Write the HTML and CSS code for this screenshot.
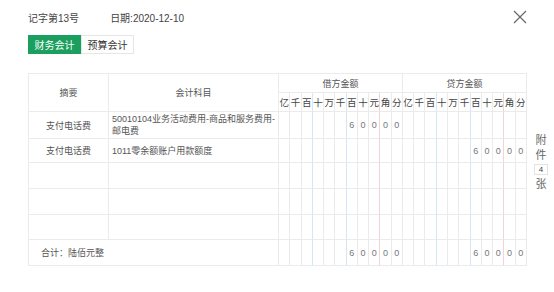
FILE: index.html
```html
<!DOCTYPE html>
<html lang="zh-CN">
<head>
  <meta charset="UTF-8" />
  <title>记账凭证</title>
  <link rel="stylesheet" href="styles.css">
</head>
<body>

  <div class="voucher">
    <div class="voucher-top">
      <div class="voucher-info">
        <span>记字第13号</span>
        <span class="voucher-date">日期:2020-12-10</span>
      </div>
      <button class="close-btn" aria-label="关闭">
        <svg width="14" height="14" viewBox="0 0 14 14">
          <path d="M1 1L13 13M13 1L1 13" stroke="#6b6b6b" stroke-width="1.3" fill="none"/>
        </svg>
      </button>
    </div>

    <div class="tabs">
      <button class="tab active">财务会计</button>
      <button class="tab">预算会计</button>
    </div>

    <div class="voucher-body">
      <table class="entry-table">
        <colgroup>
          <col class="c-summary">
          <col class="c-subject">
          <col><col><col><col><col><col><col><col><col><col><col>
          <col><col><col><col><col><col><col><col><col><col><col>
        </colgroup>
        <thead>
          <tr class="head-1">
            <th rowspan="2">摘要</th>
            <th rowspan="2">会计科目</th>
            <th colspan="11">借方金额</th>
            <th colspan="11">贷方金额</th>
          </tr>
          <tr class="head-2">
            <th>亿</th><th>千</th><th class="bl">百</th><th>十</th><th>万</th><th class="bl">千</th><th>百</th><th>十</th><th class="rd">元</th><th>角</th><th>分</th>
            <th>亿</th><th>千</th><th class="bl">百</th><th>十</th><th>万</th><th class="bl">千</th><th>百</th><th>十</th><th class="rd">元</th><th>角</th><th>分</th>
          </tr>
        </thead>
        <tbody>
          <tr class="row-a">
            <td class="summary">支付电话费</td>
            <td class="subject"><span class="line">50010104业务活动费用-商品和服务费用-</span><br>邮电费</td>
            <td></td><td></td><td class="bl"></td><td></td><td></td><td class="bl"></td><td>6</td><td>0</td><td class="rd">0</td><td>0</td><td>0</td>
            <td></td><td></td><td class="bl"></td><td></td><td></td><td class="bl"></td><td></td><td></td><td class="rd"></td><td></td><td></td>
          </tr>
          <tr class="row-b">
            <td class="summary">支付电话费</td>
            <td class="subject">1011零余额账户用款额度</td>
            <td></td><td></td><td class="bl"></td><td></td><td></td><td class="bl"></td><td></td><td></td><td class="rd"></td><td></td><td></td>
            <td></td><td></td><td class="bl"></td><td></td><td></td><td class="bl"></td><td>6</td><td>0</td><td class="rd">0</td><td>0</td><td>0</td>
          </tr>
          <tr class="row-c">
            <td></td><td></td>
            <td></td><td></td><td class="bl"></td><td></td><td></td><td class="bl"></td><td></td><td></td><td class="rd"></td><td></td><td></td>
            <td></td><td></td><td class="bl"></td><td></td><td></td><td class="bl"></td><td></td><td></td><td class="rd"></td><td></td><td></td>
          </tr>
          <tr class="row-c">
            <td></td><td></td>
            <td></td><td></td><td class="bl"></td><td></td><td></td><td class="bl"></td><td></td><td></td><td class="rd"></td><td></td><td></td>
            <td></td><td></td><td class="bl"></td><td></td><td></td><td class="bl"></td><td></td><td></td><td class="rd"></td><td></td><td></td>
          </tr>
          <tr class="row-d">
            <td></td><td></td>
            <td></td><td></td><td class="bl"></td><td></td><td></td><td class="bl"></td><td></td><td></td><td class="rd"></td><td></td><td></td>
            <td></td><td></td><td class="bl"></td><td></td><td></td><td class="bl"></td><td></td><td></td><td class="rd"></td><td></td><td></td>
          </tr>
          <tr class="row-total">
            <td class="total" colspan="2">合计：陆佰元整</td>
            <td></td><td></td><td class="bl"></td><td></td><td></td><td class="bl"></td><td>6</td><td>0</td><td class="rd">0</td><td>0</td><td>0</td>
            <td></td><td></td><td class="bl"></td><td></td><td></td><td class="bl"></td><td>6</td><td>0</td><td class="rd">0</td><td>0</td><td>0</td>
          </tr>
        </tbody>
      </table>

      <div class="attach">
        <span>附</span>
        <span>件</span>
        <span class="attach-count">4</span>
        <span>张</span>
      </div>
    </div>
  </div>

</body>
</html>
```

FILE: styles.css
```css
* {
  box-sizing: border-box;
  margin: 0;
  padding: 0;
}

body {
  font-family: 'Liberation Sans', 'Noto Sans CJK SC', sans-serif;
  background-color: #ffffff;
  color: #555555;
}

.voucher {
  padding: 8px 0 0 28px;
}

.voucher-top {
  width: 499px;
  height: 18px;
  display: flex;
  align-items: center;
  justify-content: space-between;
}

.voucher-info {
  display: flex;
  font-size: 10px;
  color: #444444;
}

.voucher-date {
  margin-left: 31px;
}

.close-btn {
  border: none;
  background: none;
  width: 14px;
  height: 14px;
  display: flex;
  cursor: pointer;
}

.tabs {
  display: flex;
  margin-top: 9px;
}

.tab {
  width: 53px;
  height: 19px;
  font-family: inherit;
  font-size: 10px;
  color: #333333;
  background-color: #ffffff;
  border: 1px solid #e6e6e6;
  cursor: pointer;
}

.tab.active {
  background-color: #1b9f5e;
  border-color: #1b9f5e;
  color: #ffffff;
}

.voucher-body {
  display: flex;
  align-items: flex-start;
  margin-top: 19px;
}

.entry-table {
  width: 499px;
  table-layout: fixed;
  border-collapse: separate;
  border-spacing: 0;
  border-top: 1px solid #ebebeb;
  border-left: 1px solid #ebebeb;
  font-size: 9px;
}

.c-summary {
  width: 80px;
}

.c-subject {
  width: 170px;
}

.entry-table th,
.entry-table td {
  border-right: 1px solid #ebebeb;
  border-bottom: 1px solid #ebebeb;
  font-weight: normal;
  text-align: center;
  padding: 0;
  color: #555555;
}

.entry-table .bl {
  border-right-color: #d3e7f6;
}

.entry-table .rd {
  border-right-color: #f3d4d4;
}

.head-1 th {
  height: 19px;
}

.head-2 th {
  height: 19px;
  font-size: 9.5px;
  color: #444444;
}

.row-a td {
  height: 27px;
}

.row-b td {
  height: 24px;
}

.row-c td {
  height: 26px;
}

.row-d td {
  height: 25px;
}

.row-total td {
  height: 26px;
}

.entry-table td {
  color: #777777;
}

.entry-table td.summary,
.entry-table td.subject,
.entry-table td.total {
  color: #555555;
}

.entry-table td.subject {
  text-align: left;
  padding: 0 0 0 3px;
  line-height: 12px;
}

.subject .line {
  white-space: nowrap;
}

.entry-table td.total {
  text-align: left;
  padding-left: 12px;
}

.attach {
  display: flex;
  flex-direction: column;
  align-items: center;
  width: 16px;
  margin: 60px 0 0 6px;
  font-size: 11px;
  line-height: 15px;
  color: #666666;
}

.attach-count {
  width: 14px;
  height: 11px;
  margin: 1px 0 2px;
  border: 1px solid #e3e3e3;
  font-size: 8px;
  line-height: 9px;
  text-align: center;
  color: #444444;
}
```
